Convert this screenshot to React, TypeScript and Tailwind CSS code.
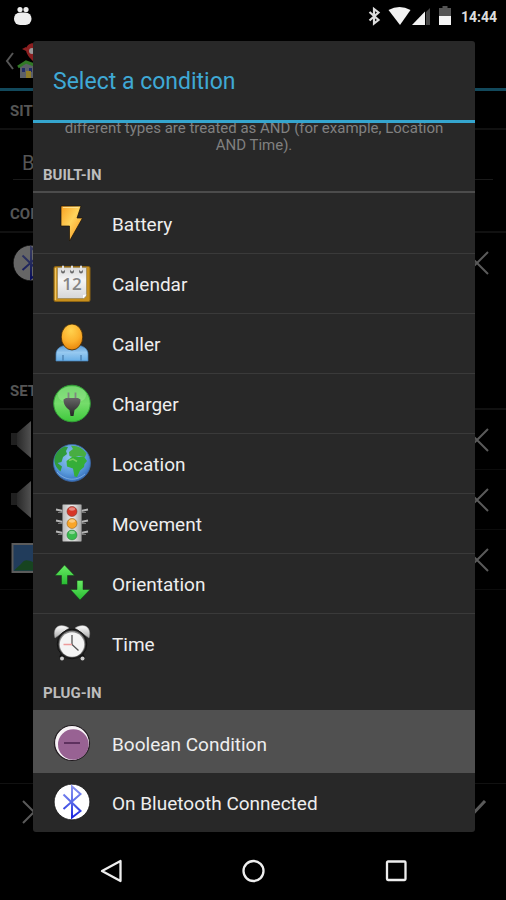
import type { ReactNode } from 'react';

function BatteryIcon() {
  return (
    <svg viewBox="0 0 40 40" className="size-10 shrink-0" aria-hidden="true">
      <defs>
        <linearGradient id="bolt" x1="0" y1="0" x2="1" y2="1">
          <stop offset="0" stopColor="#f8a020" />
          <stop offset="0.45" stopColor="#ffd35c" />
          <stop offset="1" stopColor="#f58a12" />
        </linearGradient>
      </defs>
      <path d="M9 3H29L25 15H30.500L17.500 38V23H9Z" fill="url(#bolt)" stroke="#1a1208" strokeWidth="0.700" />
      <path d="M11 4.500H26.500" stroke="#ffe9a0" strokeWidth="0.800" />
    </svg>
  );
}

function CalendarIcon() {
  return (
    <svg viewBox="0 0 40 40" className="size-10 shrink-0" aria-hidden="true">
      <defs>
        <linearGradient id="sheet" x1="0" y1="0" x2="0" y2="1">
          <stop offset="0" stopColor="#d8d8d8" />
          <stop offset="0.4" stopColor="#f5f5f5" />
          <stop offset="1" stopColor="#d6d6d8" />
        </linearGradient>
      </defs>
      <rect x="2" y="3.500" width="36" height="35" rx="1.500" fill="#c78f1d" stroke="#8d6414" />
      <path d="M3.500 5V37" stroke="#efc665" strokeWidth="1.300" />
      <path d="M5.500 4.500H34.500V33L32 35.500H5.500Z" fill="url(#sheet)" stroke="#8f7c50" strokeWidth="0.600" />
      <path d="M34.500 31.500L31 35.500V32Z" fill="#fff" />
      <g fill="#666">
        <circle cx="11" cy="8.500" r="1.900" />
        <circle cx="20" cy="8.500" r="1.900" />
        <circle cx="29" cy="8.500" r="1.900" />
      </g>
      <g stroke="#e5e5e5" strokeWidth="2" strokeLinecap="round">
        <path d="M11 3.500V7.500M20 3.500V7.500M29 3.500V7.500" />
      </g>
      <text x="20" y="26.500" textAnchor="middle" fontFamily="Open Sans, sans-serif" fontSize="17" fontWeight="600" fill="#858585">
        12
      </text>
    </svg>
  );
}

function CallerIcon() {
  return (
    <svg viewBox="0 0 40 40" className="size-10 shrink-0" aria-hidden="true">
      <defs>
        <linearGradient id="body" x1="0" y1="0" x2="0" y2="1">
          <stop offset="0" stopColor="#5b9ad2" />
          <stop offset="0.45" stopColor="#97c9f0" />
          <stop offset="1" stopColor="#67aee6" />
        </linearGradient>
        <radialGradient id="head" cx="0.45" cy="0.25" r="0.75">
          <stop offset="0" stopColor="#ffd24e" />
          <stop offset="0.6" stopColor="#fbb02c" />
          <stop offset="1" stopColor="#e8860c" />
        </radialGradient>
      </defs>
      <path d="M4 38V31C4 26.500 8 23 13 22.500H27C32 23 36 26.500 36 31V38Z" fill="url(#body)" stroke="#4681b7" strokeWidth="0.700" />
      <path d="M11 32V37.500M29 32V37.500" stroke="#4479aa" strokeWidth="1.200" />
      <ellipse cx="20" cy="14" rx="10.800" ry="13" fill="url(#head)" stroke="#3a2608" strokeWidth="0.800" />
    </svg>
  );
}

function ChargerIcon() {
  return (
    <svg viewBox="0 0 40 40" className="size-10 shrink-0" aria-hidden="true">
      <defs>
        <linearGradient id="disc" x1="0" y1="0" x2="0" y2="1">
          <stop offset="0" stopColor="#58c855" />
          <stop offset="0.5" stopColor="#75dc6b" />
          <stop offset="1" stopColor="#3dc83b" />
        </linearGradient>
        <linearGradient id="plug" x1="0" y1="0" x2="0" y2="1">
          <stop offset="0" stopColor="#666" />
          <stop offset="1" stopColor="#252525" />
        </linearGradient>
      </defs>
      <circle cx="20" cy="20.500" r="18.300" fill="url(#disc)" stroke="#329f37" />
      <ellipse cx="20" cy="12" rx="14" ry="8.500" fill="#b9f5b0" opacity="0.3" />
      <path d="M16.500 9.500V16M23.500 9.500V16" stroke="#808780" strokeWidth="1.800" />
      <path d="M11.500 16.500L14 15H26L28.500 16.500C28.500 22 25.500 25 22.500 27L21.500 33H18.500L17.500 27C14.500 25 11.500 22 11.500 16.500Z" fill="url(#plug)" />
    </svg>
  );
}

function LocationIcon() {
  return (
    <svg viewBox="0 0 40 40" className="size-10 shrink-0" aria-hidden="true">
      <defs>
        <radialGradient id="sea" cx="0.45" cy="0.35" r="0.7">
          <stop offset="0" stopColor="#8fc4ec" />
          <stop offset="0.6" stopColor="#5a9bdc" />
          <stop offset="1" stopColor="#2f68b8" />
        </radialGradient>
      </defs>
      <circle cx="20" cy="20" r="18.500" fill="url(#sea)" stroke="#3b67a4" strokeWidth="0.800" />
      <path d="M2.500 15C4 9.500 8 5 13 3.500L16 4L14 8L15 11L11 14L9.500 19L5.500 20L10 23.500L8.500 28.500C4 25 1.800 20 2.500 15Z" fill="#309b3b" />
      <path d="M17 9L21 6L19 2.800C26 2.500 31 5.500 34.500 10.500L33 14L27 13L22 14.500L17.500 13Z" fill="#48ad42" />
      <path d="M14.500 18L20 14L27 14L32 13.500L35 18L32.500 21L32 24L28 27.500L25 34L22.500 33.500L21 25.500L15 23.500Z" fill="#35ae38" />
      <path d="M17 17.500L21 16L25 18.500" stroke="#7acc5f" strokeWidth="1.500" fill="none" />
      <path d="M5 29C11 36 23 40 33 31" stroke="#b2d6f6" strokeWidth="1" fill="none" opacity="0.5" />
    </svg>
  );
}

function MovementIcon() {
  return (
    <svg viewBox="0 0 40 40" className="size-10 shrink-0" aria-hidden="true">
      <defs>
        <linearGradient id="post" x1="0" y1="0" x2="1" y2="0">
          <stop offset="0" stopColor="#b8b8b8" />
          <stop offset="0.5" stopColor="#eeeeee" />
          <stop offset="1" stopColor="#a5a5a5" />
        </linearGradient>
      </defs>
      <g stroke="#b5b5b5" strokeWidth="2" fill="none">
        <path d="M4 6.500L11 8M4 17.500L11 19M4 28.500L11 30M36 6.500L29 8M36 17.500L29 19M36 28.500L29 30" />
        <path d="M6 9.500H11M6 20.500H11M6 31.500H11M34 9.500H29M34 20.500H29M34 31.500H29" stroke="#777" strokeWidth="1.200" />
      </g>
      <rect x="10.500" y="1.500" width="19" height="37" rx="1" fill="url(#post)" stroke="#777" strokeWidth="0.700" />
      <circle cx="20" cy="8.500" r="5" fill="#d73627" stroke="#7e362e" strokeWidth="0.600" />
      <circle cx="20" cy="20.500" r="5" fill="#f9a529" stroke="#906223" strokeWidth="0.600" />
      <circle cx="20" cy="32" r="5" fill="#39bb4d" stroke="#28783a" strokeWidth="0.600" />
      <g fill="#fff" opacity="0.4">
        <ellipse cx="20" cy="6" rx="3" ry="1.700" />
        <ellipse cx="20" cy="18" rx="3" ry="1.700" />
        <ellipse cx="20" cy="29.500" rx="3" ry="1.700" />
      </g>
    </svg>
  );
}

function OrientationIcon() {
  return (
    <svg viewBox="0 0 40 40" className="size-10 shrink-0" aria-hidden="true">
      <defs>
        <linearGradient id="arrow" x1="0" y1="0" x2="0" y2="1">
          <stop offset="0" stopColor="#69ed64" />
          <stop offset="1" stopColor="#28ba32" />
        </linearGradient>
      </defs>
      <g fill="url(#arrow)" stroke="#123c17" strokeWidth="0.500" strokeLinejoin="round">
        <path d="M12.500 2L22.500 12.500H15.500V21.500H9.500V12.500H3Z" />
        <path d="M25 17.500H31V26.500H38L28 37L18.500 26.500H25Z" />
      </g>
    </svg>
  );
}

function TimeIcon() {
  return (
    <svg viewBox="0 0 40 40" className="size-10 shrink-0" aria-hidden="true">
      <defs>
        <linearGradient id="bell" x1="0" y1="0" x2="0" y2="1">
          <stop offset="0" stopColor="#fff" />
          <stop offset="1" stopColor="#aaa" />
        </linearGradient>
      </defs>
      <path d="M11 31L9 35M29 31L31 35" stroke="#111" strokeWidth="4" />
      <circle cx="10" cy="35.500" r="2" fill="#ccc" />
      <circle cx="30.500" cy="35.500" r="2" fill="#ccc" />
      <path d="M3 15C0 5 7 -1 17 5Z" fill="url(#bell)" stroke="#888" strokeWidth="0.500" />
      <path d="M37 15C40 5 33 -1 23 5Z" fill="url(#bell)" stroke="#888" strokeWidth="0.500" />
      <circle cx="20" cy="21" r="14.800" fill="#303030" stroke="#111" />
      <circle cx="20" cy="21" r="13.200" fill="#888" />
      <circle cx="20" cy="21.500" r="12.200" fill="#f4f4f4" />
      <path d="M20 12V21.500L26.500 27.500" stroke="#555" strokeWidth="1.300" fill="none" />
      <path d="M11.500 21.500H20" stroke="#ee9b9b" strokeWidth="1.500" />
    </svg>
  );
}

function BooleanIcon() {
  return (
    <svg viewBox="0 0 40 40" className="size-10 shrink-0" aria-hidden="true">
      <circle cx="20" cy="20" r="17.500" fill="#f7f2f6" stroke="#211c20" strokeWidth="1.200" />
      <circle cx="21.300" cy="21.500" r="15.300" fill="#986293" />
      <path d="M12 20H28" stroke="#5e315f" strokeWidth="2" />
    </svg>
  );
}

function BluetoothDisc() {
  return (
    <svg viewBox="0 0 40 40" className="size-10 shrink-0" aria-hidden="true">
      <defs>
        <linearGradient id="rune" gradientUnits="userSpaceOnUse" x1="20" y1="4" x2="20" y2="36">
          <stop offset="0" stopColor="#8c95f2" />
          <stop offset="0.5" stopColor="#5969e8" />
          <stop offset="1" stopColor="#1722e0" />
        </linearGradient>
      </defs>
      <circle cx="20" cy="20" r="17.800" fill="#fff" stroke="#111" strokeWidth="0.700" />
      <path d="M11.500 12.500L28.500 29L20 35.500V4.500L28.500 12L11.500 27" fill="none" stroke="url(#rune)" strokeWidth="2" />
    </svg>
  );
}

function Cross() {
  return (
    <svg viewBox="0 0 24 24" className="size-6" fill="none" stroke="#5a5a5a" strokeWidth="2" aria-hidden="true">
      <path d="M1 1L23 23M23 1L1 23" />
    </svg>
  );
}

function Speaker() {
  return (
    <svg viewBox="0 0 40 40" className="size-10" aria-hidden="true">
      <defs>
        <linearGradient id="cone" x1="0" y1="0" x2="1" y2="0">
          <stop offset="0" stopColor="#292929" />
          <stop offset="1" stopColor="#515151" />
        </linearGradient>
      </defs>
      <rect x="2" y="13" width="7" height="12" fill="#202020" />
      <path d="M8 13L22 1V38L8 26Z" fill="url(#cone)" />
    </svg>
  );
}

function Picture() {
  return (
    <svg viewBox="0 0 40 40" className="size-10" aria-hidden="true">
      <rect x="3.500" y="4" width="36" height="28" fill="#213c5b" stroke="#5b5b5b" strokeWidth="2" />
      <path d="M5 30.500L12 24C16 19 18 20 24 22L37 30.500Z" fill="#174420" />
    </svg>
  );
}

function SectionHeading({ children }: { children: ReactNode }) {
  return (
    <h2 className="flex h-[39px] items-center border-b-2 border-[#111111] px-[10px] pt-1 text-[15px] font-bold text-[#555555]">
      {children}
    </h2>
  );
}

function SettingRow({ icon, label }: { icon: ReactNode; label: string }) {
  return (
    <li className="flex h-[60px] items-center justify-between border-b border-[#0c0c0c] pr-[17px] pl-[9px]">
      {icon}
      <button type="button" aria-label={label}>
        <Cross />
      </button>
    </li>
  );
}

function StatusBar() {
  return (
    <header className="flex h-8 shrink-0 items-center justify-between pr-[9px] pl-[13px] text-[#eeeeee]">
      <svg viewBox="0 0 20 20" className="size-5" fill="#eeeeee" aria-hidden="true">
        <circle cx="7" cy="3.500" r="2.600" />
        <circle cx="13" cy="3.500" r="2.600" />
        <rect x="1" y="6.500" width="17.500" height="12.500" rx="6" />
      </svg>
      <div className="flex items-center gap-[9px]">
        <svg viewBox="0 0 84 32" className="h-8 w-[84px]" aria-hidden="true">
          <path d="M1.500 12L10.500 20L6 23.500V9L10.500 12.500L1.500 20.500" fill="none" stroke="#dddddd" strokeWidth="2.200" />
          <path d="M20.500 10Q31.500 4 42.500 10L32 25Z" fill="#f2f2f2" />
          <path d="M62 8V25H58V12Z" fill="#444444" />
          <path d="M44 25L57 11.500V25Z" fill="#f2f2f2" />
          <path d="M71 8H74.500V6H79.500V8H83V16H71Z" fill="#555555" />
          <rect x="71" y="16" width="12" height="9" fill="#f5f5f5" />
        </svg>
        <span className="pt-[2px] text-sm leading-[30px] font-bold text-[#dddddd]">14:44</span>
      </div>
    </header>
  );
}

const builtIn = [
  { label: 'Battery', icon: <BatteryIcon /> },
  { label: 'Calendar', icon: <CalendarIcon /> },
  { label: 'Caller', icon: <CallerIcon /> },
  { label: 'Charger', icon: <ChargerIcon /> },
  { label: 'Location', icon: <LocationIcon /> },
  { label: 'Movement', icon: <MovementIcon /> },
  { label: 'Orientation', icon: <OrientationIcon /> },
  { label: 'Time', icon: <TimeIcon /> },
];

function ConditionButton({ icon, label, active = false }: { icon: ReactNode; label: string; active?: boolean }) {
  return (
    <button
      type="button"
      className={
        active
          ? 'flex h-[63px] w-full items-center gap-5 bg-[#505050] px-[19px] pt-[2px] text-left'
          : 'flex h-[59px] w-full items-center gap-5 px-[19px] pb-[2px] text-left'
      }
    >
      {icon}
      <span className="pt-1 text-[19px] leading-6 text-[#eeeeee]">{label}</span>
    </button>
  );
}

function ConditionDialog() {
  return (
    <div
      role="dialog"
      aria-modal="true"
      aria-labelledby="dialog-title"
      className="absolute top-[41px] right-[31px] left-[33px] overflow-hidden rounded-[3px] bg-[#282828]"
    >
      <h1 id="dialog-title" className="flex h-[82px] items-center border-b-[3px] border-[#35a5ce] px-5 pt-1 text-[23px] text-[#3fa9d5]">
        Select a condition
      </h1>
      <div className="flex h-[34px] flex-col justify-end overflow-hidden">
        <p className="px-6 pb-[3px] text-center text-[15px] leading-[17px] text-[#808080]">
          different types are treated as AND (for example, Location AND Time).
        </p>
      </div>
      <h2 className="flex h-9 items-center border-b-2 border-[#4c4c4c] px-[10px] pt-[2px] text-[15px] font-bold text-[#bdbdbd]">
        BUILT-IN
      </h2>
      <ul className="divide-y divide-[#3a3a3a] pt-px">
        {builtIn.map((item) => (
          <li key={item.label}>
            <ConditionButton icon={item.icon} label={item.label} />
          </li>
        ))}
      </ul>
      <h2 className="flex h-9 items-center px-[10px] pt-1 text-[15px] font-bold text-[#bdbdbd]">PLUG-IN</h2>
      <ul className="pt-px">
        <li>
          <ConditionButton icon={<BooleanIcon />} label="Boolean Condition" active />
        </li>
        <li>
          <ConditionButton icon={<BluetoothDisc />} label="On Bluetooth Connected" />
        </li>
      </ul>
    </div>
  );
}

export default function App() {
  return (
    <div className="relative flex min-h-screen flex-col overflow-hidden bg-black font-[Roboto,sans-serif]">
      <StatusBar />
      <main className="flex flex-1 flex-col">
        <div className="flex h-[59px] items-center border-b-[3px] border-[#12495c] pl-1">
          <svg viewBox="0 0 50 56" className="h-14 w-[50px]" aria-hidden="true">
            <path d="M9 21L3 29L9 37" fill="none" stroke="#555" strokeWidth="2" />
            <path d="M18 17L22 15L24 20ZM22 18C22 9 36 9 36 18C36 23 29 29 29 29C29 29 22 23 22 18Z" fill="#8c1f20" />
            <circle cx="28" cy="19" r="3" fill="#999" />
            <path d="M16 34L23 30L38 34V46H16Z" fill="#5c6068" />
            <path d="M14 35L22 30L36 35" fill="none" stroke="#317927" strokeWidth="3" />
            <rect x="18" y="36" width="3" height="4" fill="#222c68" />
            <rect x="25" y="36" width="3" height="4" fill="#222c68" />
            <rect x="22" y="39" width="5" height="7" fill="#907c28" />
          </svg>
        </div>
        <SectionHeading>SIT</SectionHeading>
        <div className="mx-[13px] h-[50px] border-b border-[#1a1a1a]">
          <input
            aria-label="Situation"
            defaultValue="B"
            className="h-full w-full bg-transparent px-[9px] pt-4 text-xl text-[#555555] outline-none"
          />
        </div>
        <div className="pt-[14px]">
          <SectionHeading>CON</SectionHeading>
        </div>
        <ul className="h-[138px]">
          <li className="flex h-[60px] items-center justify-between pr-[17px] pl-[11px]">
            <span className="opacity-40">
              <BluetoothDisc />
            </span>
            <button type="button" aria-label="Remove condition">
              <Cross />
            </button>
          </li>
        </ul>
        <SectionHeading>SET</SectionHeading>
        <ul>
          <SettingRow icon={<Speaker />} label="Remove first volume" />
          <SettingRow icon={<Speaker />} label="Remove second volume" />
          <SettingRow icon={<Picture />} label="Remove wallpaper" />
        </ul>
        <div className="mt-auto flex h-[57px] items-center justify-between border-t border-[#111111] pr-[18px] pl-[22px]">
          <button type="button" aria-label="Cancel">
            <Cross />
          </button>
          <button type="button" aria-label="Save">
            <svg viewBox="0 0 32 24" className="h-6 w-8" fill="none" stroke="#5a5a5a" strokeWidth="3" aria-hidden="true">
              <path d="M2 11L11 20L29 1" />
            </svg>
          </button>
        </div>
      </main>
      <nav className="flex h-[60px] shrink-0 items-center justify-center gap-[118px] pt-[2px]">
        <button type="button" aria-label="Back">
          <svg viewBox="0 0 24 24" className="size-6" fill="none" stroke="#eeeeee" strokeWidth="2.300" aria-hidden="true">
            <path d="M21.500 2V22L3 12Z" strokeLinejoin="round" />
          </svg>
        </button>
        <button type="button" aria-label="Home">
          <svg viewBox="0 0 24 24" className="size-6" fill="none" stroke="#eeeeee" strokeWidth="2.300" aria-hidden="true">
            <circle cx="12.500" cy="12" r="10" />
          </svg>
        </button>
        <button type="button" aria-label="Recent apps">
          <svg viewBox="0 0 24 24" className="size-6" fill="none" stroke="#eeeeee" strokeWidth="2.300" aria-hidden="true">
            <rect x="4" y="2.500" width="18.500" height="18.500" rx="1" />
          </svg>
        </button>
      </nav>
      <ConditionDialog />
    </div>
  );
}
